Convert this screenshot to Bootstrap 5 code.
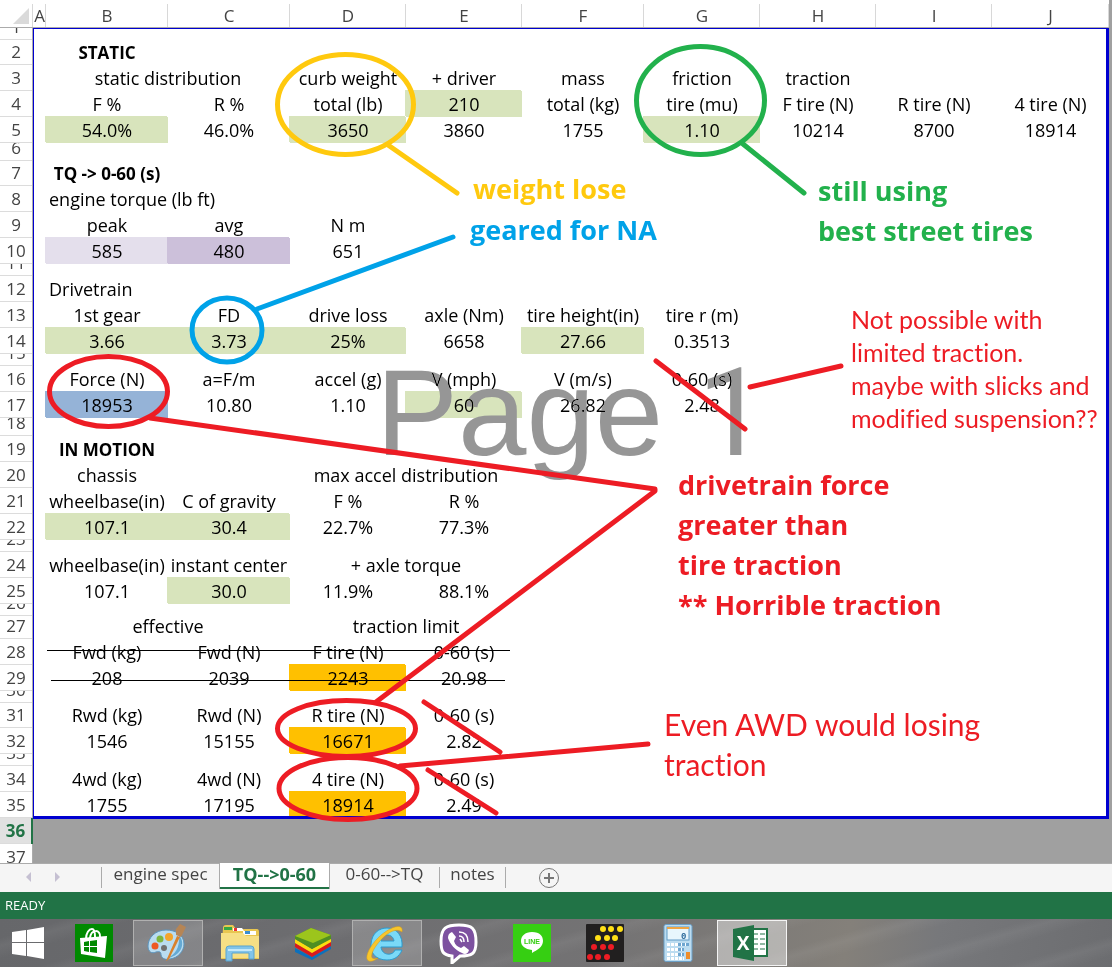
<!DOCTYPE html>
<html lang="en">
<head>
<meta charset="utf-8">
<meta name="viewport" content="width=device-width, initial-scale=1">
<title>TQ--&gt;0-60</title>
<link href="https://cdn.jsdelivr.net/npm/bootstrap@5.3.0/dist/css/bootstrap.min.css" rel="stylesheet">
<style>
  :root { --ui: "Open Sans", "Noto Sans", sans-serif; --cell: "Open Sans", "Noto Sans", sans-serif; --xl: #217346; --ink: #ed1c24; }
  body { font-family: var(--ui); background: #a0a0a0; }

  /* worksheet */
  .workarea { background: #a0a0a0; min-height: 0; }
  .grid { width: calc(100% - 3px); table-layout: fixed; border-collapse: separate; border-spacing: 0; font: 18px/21px var(--cell); color: #000; }
  .grid tr { --h: 26px; }
  .grid tr.h12 { --h: 12px; } .grid tr.h18 { --h: 18px; } .grid tr.h23 { --h: 23px; } .grid tr.h25 { --h: 25px; }
  .grid td { height: var(--h); padding: 0 0 2px; vertical-align: bottom; text-align: center; white-space: nowrap; background: #fff; }
  .grid td.fw-bold { font-size: 17px; }
  .grid td.start { text-align: left; padding-left: 3px; }
  .grid th { padding: 0; background: #fff; font: 17px/24px var(--ui); color: #444; text-align: center; }
  .grid thead th { height: 28px; line-height: 23px; border-bottom: 1px solid #ababab; background: linear-gradient(#d8d8d8, #d8d8d8) right bottom / 1px 23px no-repeat #fff; padding-top: 4px; }
  .grid thead th:first-child svg { display: block; margin-left: 13px; }
  .grid tbody th { height: var(--h); border-right: 1px solid #ababab; }
  .grid tbody th span { display: flex; align-items: flex-end; justify-content: center; height: var(--h); overflow: hidden; border-bottom: 1px solid #dcdcdc; }
  .grid tr.beyond td { background: #a0a0a0; }
  .grid tr.beyond th.current { background: #e1e1e1; color: var(--xl); font-weight: 700; border-right: 2px solid var(--xl); }
  .grid td.f-green { --f: #d8e4bc; } .grid td.f-gold { --f: #ffc000; } .grid td.f-blue { --f: #95b3d7; }
  .grid td.f-lilac { --f: #e4dfec; } .grid td.f-violet { --f: #ccc0da; }
  .grid td[class*="f-"] { background: var(--f); box-shadow: -1px -1px 0 var(--f); }
  .print-area { top: 28px; left: 33px; right: 3px; height: 791px; border: solid #0000d0; border-width: 1px 3px 3px 1px; pointer-events: none; }
  .page-mark { left: 376px; top: 342px; font: 123px/141px "Liberation Sans", Arial, sans-serif; color: #969696; mix-blend-mode: darken; white-space: nowrap; }
  .page-mark span { font-family: Roboto, sans-serif; line-height: 1; }
  .ink-layer { top: 0; left: 0; width: 100%; height: 864px; pointer-events: none; fill: none; stroke-width: 5; stroke-linecap: round; stroke-linejoin: round; }

  /* pen notes on the sheet */
  .note { white-space: nowrap; margin: 0; font: 700 27px/40px var(--cell); color: var(--ink); }
  .note-thin, .note-small { font-family: Lato, "Open Sans", sans-serif; font-weight: 400; font-variant-ligatures: none; }
  .note-thin { font-size: 30px; }
  .note-small { font-size: 25px; line-height: 33px; }
  .n-weight { left: 473px; top: 169px; color: #ffc90e; }
  .n-gear { left: 470px; top: 210px; color: #00a2e8; }
  .n-tires { left: 818px; top: 171px; color: #22b14c; }
  .n-slicks { left: 851px; top: 303px; }
  .n-force { left: 678px; top: 465px; }
  .n-awd { left: 664px; top: 704px; }

  /* sheet tabs */
  .tabbar { height: 29px; background: #f5f5f5; border-top: 1px solid #ababab; font-size: 17px; line-height: 18px; }
  .tabbar button { border: 0; background: none; padding: 0; color: #444; }
  .tab-nav { width: 101px; padding: 4px 0 0 24px; gap: 20px; }
  .sheet-tab { height: 24px; padding-bottom: 4px !important; }
  .tabbar .sep { width: 1px; height: 21px; margin-top: 3px; background: #ababab; }
  .tabbar .sheet-tab.active { margin-top: -1px; height: 26px; background: #fff; color: var(--xl); font-size: 18px; font-weight: 700; border: solid #ababab; border-width: 0 1px; box-shadow: inset 0 -2px var(--xl); }
  .w-1 { width: 117px; } .w-2 { width: 111px; } .w-3 { width: 109px; } .w-4 { width: 65px; }
  .add-tab { margin: 3px 0 0 32px; }

  .statusbar { height: 27px; background: var(--xl); color: #fff; font-size: 13px; line-height: 27px; padding-left: 5px; }

  /* taskbar */
  .taskbar { height: 48px; gap: 3px; padding: 1px 0; background: repeating-linear-gradient(164deg, transparent 0 18px, rgba(255,255,255,.05) 26px, transparent 38px), linear-gradient(100deg, #66676a 0, #6d6d70 30%, #747374 55%, #84807a 76%, #77787b 84%, #6c6d70 100%); }
  .taskbar button { width: 70px; height: 46px; padding: 0 2px 0 0; border: 1px solid transparent; background: none; }
  .taskbar button.start-btn { width: 57px; }
  .taskbar button.open { background: rgba(255,255,255,.18); border-color: #b0b0b0; }
  .taskbar button.front { background: rgba(255,255,255,.42); border-color: #f4f4f4; }
  .taskbar svg { display: block; margin: auto; }
</style>
</head>
<body>
<div class="d-flex flex-column vh-100 overflow-hidden">
  <main class="workarea position-relative flex-grow-1 overflow-hidden">
    <table class="grid">
      <colgroup><col style="width:33px"><col style="width:13px"><col style="width:122px"><col style="width:122px"><col style="width:116px"><col style="width:116px"><col style="width:122px"><col style="width:116px"><col style="width:116px"><col style="width:116px"><col style="width:117px"></colgroup>
      <thead><tr><th aria-label="Select all"><svg width="16" height="16"><path d="M16 0v16H0z" fill="#dadada"/></svg></th><th>A</th><th>B</th><th>C</th><th>D</th><th>E</th><th>F</th><th>G</th><th>H</th><th>I</th><th>J</th></tr></thead>
      <tbody>
      <tr class="h12"><th><span>1</span></th><td colspan="10"></td></tr>
      <tr class="h25"><th><span>2</span></th><td></td><td class="fw-bold">STATIC</td><td colspan="8"></td></tr>
      <tr><th><span>3</span></th><td></td><td colspan="2">static distribution</td><td>curb weight</td><td>+ driver</td><td>mass</td><td>friction</td><td>traction</td><td></td><td></td></tr>
      <tr><th><span>4</span></th><td></td><td>F %</td><td>R %</td><td>total (lb)</td><td class="f-green">210</td><td>total (kg)</td><td>tire (mu)</td><td>F tire (N)</td><td>R tire (N)</td><td>4 tire (N)</td></tr>
      <tr><th><span>5</span></th><td></td><td class="f-green">54.0%</td><td>46.0%</td><td class="f-green">3650</td><td>3860</td><td>1755</td><td class="f-green">1.10</td><td>10214</td><td>8700</td><td>18914</td></tr>
      <tr class="h18"><th><span>6</span></th><td colspan="10"></td></tr>
      <tr class="h25"><th><span>7</span></th><td></td><td class="fw-bold">TQ -&gt; 0-60 (s)</td><td colspan="8"></td></tr>
      <tr><th><span>8</span></th><td></td><td class="start" colspan="2">engine torque (lb ft)</td><td colspan="7"></td></tr>
      <tr><th><span>9</span></th><td></td><td>peak</td><td>avg</td><td>N m</td><td colspan="6"></td></tr>
      <tr><th><span>10</span></th><td></td><td class="f-lilac">585</td><td class="f-violet">480</td><td>651</td><td colspan="6"></td></tr>
      <tr class="h12"><th><span>11</span></th><td colspan="10"></td></tr>
      <tr><th><span>12</span></th><td></td><td class="start">Drivetrain</td><td colspan="8"></td></tr>
      <tr><th><span>13</span></th><td></td><td>1st gear</td><td>FD</td><td>drive loss</td><td>axle (Nm)</td><td>tire height(in)</td><td>tire r (m)</td><td colspan="3"></td></tr>
      <tr><th><span>14</span></th><td></td><td class="f-green">3.66</td><td class="f-green">3.73</td><td class="f-green">25%</td><td>6658</td><td class="f-green">27.66</td><td>0.3513</td><td colspan="3"></td></tr>
      <tr class="h12"><th><span>15</span></th><td colspan="10"></td></tr>
      <tr><th><span>16</span></th><td></td><td>Force (N)</td><td>a=F/m</td><td>accel (g)</td><td>V (mph)</td><td>V (m/s)</td><td>0-60 (s)</td><td colspan="3"></td></tr>
      <tr><th><span>17</span></th><td></td><td class="f-blue">18953</td><td>10.80</td><td>1.10</td><td class="f-green">60</td><td>26.82</td><td>2.48</td><td colspan="3"></td></tr>
      <tr class="h18"><th><span>18</span></th><td colspan="10"></td></tr>
      <tr><th><span>19</span></th><td></td><td class="fw-bold">IN MOTION</td><td colspan="8"></td></tr>
      <tr><th><span>20</span></th><td></td><td>chassis</td><td></td><td colspan="2">max accel distribution</td><td colspan="5"></td></tr>
      <tr><th><span>21</span></th><td></td><td>wheelbase(in)</td><td>C of gravity</td><td>F %</td><td>R %</td><td colspan="5"></td></tr>
      <tr><th><span>22</span></th><td></td><td class="f-green">107.1</td><td class="f-green">30.4</td><td>22.7%</td><td>77.3%</td><td colspan="5"></td></tr>
      <tr class="h12"><th><span>23</span></th><td colspan="10"></td></tr>
      <tr><th><span>24</span></th><td></td><td>wheelbase(in)</td><td>instant center</td><td colspan="2">+ axle torque</td><td colspan="5"></td></tr>
      <tr><th><span>25</span></th><td></td><td>107.1</td><td class="f-green">30.0</td><td>11.9%</td><td>88.1%</td><td colspan="5"></td></tr>
      <tr class="h12"><th><span>26</span></th><td colspan="10"></td></tr>
      <tr class="h23"><th><span>27</span></th><td></td><td colspan="2">effective</td><td colspan="2">traction limit</td><td colspan="5"></td></tr>
      <tr><th><span>28</span></th><td></td><td>Fwd (kg)</td><td>Fwd (N)</td><td>F tire (N)</td><td>0-60 (s)</td><td colspan="5"></td></tr>
      <tr><th><span>29</span></th><td></td><td>208</td><td>2039</td><td class="f-gold">2243</td><td>20.98</td><td colspan="5"></td></tr>
      <tr class="h12"><th><span>30</span></th><td colspan="10"></td></tr>
      <tr class="h25"><th><span>31</span></th><td></td><td>Rwd (kg)</td><td>Rwd (N)</td><td>R tire (N)</td><td>0-60 (s)</td><td colspan="5"></td></tr>
      <tr><th><span>32</span></th><td></td><td>1546</td><td>15155</td><td class="f-gold">16671</td><td>2.82</td><td colspan="5"></td></tr>
      <tr class="h12"><th><span>33</span></th><td colspan="10"></td></tr>
      <tr><th><span>34</span></th><td></td><td>4wd (kg)</td><td>4wd (N)</td><td>4 tire (N)</td><td>0-60 (s)</td><td colspan="5"></td></tr>
      <tr><th><span>35</span></th><td></td><td>1755</td><td>17195</td><td class="f-gold">18914</td><td>2.49</td><td colspan="5"></td></tr>
      <tr class="beyond"><th class="current"><span>36</span></th><td colspan="10"></td></tr>
      <tr class="beyond"><th><span>37</span></th><td colspan="10"></td></tr>
      </tbody>
    </table>
    <div class="page-mark position-absolute">Page <span>1</span></div>
    <div class="print-area position-absolute"></div>
    <svg class="ink-layer position-absolute" viewBox="0 0 1112 864" preserveAspectRatio="none">
      <path d="M47 650.500H510M51 680.500H505" stroke="#000" stroke-width="1" stroke-linecap="butt"/>
      <g stroke="#ffc90e"><ellipse cx="345.500" cy="104.500" rx="68" ry="50"/><path d="M388 145 457 193"/></g>
      <g stroke="#22b14c"><ellipse cx="700.500" cy="100.500" rx="64" ry="54"/><path d="M743 144 804 193"/></g>
      <g stroke="#00a2e8"><ellipse cx="227" cy="330" rx="35" ry="32"/><path d="M257 309 453 237"/></g>
      <g stroke="#ed1c24">
        <ellipse cx="108.500" cy="391.500" rx="59" ry="35"/>
        <ellipse cx="346.500" cy="728.500" rx="69" ry="28"/>
        <ellipse cx="348" cy="788.500" rx="69" ry="31"/>
        <path d="M150 418 655 489V491L376 702M656 361 745 429M750 387 841 366M424 702 500 752M428 770 496 813M400 766 648 744"/>
      </g>
    </svg>
    <p class="note n-weight position-absolute">weight lose</p>
    <p class="note n-gear position-absolute">geared for NA</p>
    <p class="note n-tires position-absolute">still using<br>best street tires</p>
    <p class="note note-small n-slicks position-absolute">Not possible with<br>limited traction.<br>maybe with slicks and<br>modified suspension??</p>
    <p class="note n-force position-absolute">drivetrain force<br>greater than<br>tire traction<br>** Horrible traction</p>
    <p class="note note-thin n-awd position-absolute">Even AWD would losing<br>traction</p>
  </main>

  <nav class="tabbar d-flex flex-shrink-0" aria-label="Sheets">
    <div class="tab-nav d-flex align-items-start">
      <button aria-label="Previous sheet"><svg class="d-block" width="9" height="18"><path d="M7 4v10L2 9z" fill="#c5c0d2"/></svg></button>
      <button aria-label="Next sheet"><svg class="d-block" width="9" height="18"><path d="M2 4v10l5-5z" fill="#c5c0d2"/></svg></button>
    </div>
    <span class="sep"></span>
    <button class="sheet-tab w-1">engine spec</button>
    <button class="sheet-tab w-2 active" aria-current="page">TQ--&gt;0-60</button>
    <button class="sheet-tab w-3">0-60--&gt;TQ</button>
    <span class="sep"></span>
    <button class="sheet-tab w-4">notes</button>
    <span class="sep"></span>
    <button class="add-tab align-self-start" aria-label="New sheet"><svg class="d-block" width="22" height="22" fill="none" stroke="#777"><circle cx="11" cy="11" r="9.500"/><path d="M11 6v10M6 11h10" stroke-width="2"/></svg></button>
  </nav>
  <div class="statusbar flex-shrink-0">READY</div>

  <footer class="taskbar d-flex flex-shrink-0">
    <button class="start-btn" aria-label="Start"><svg width="34" height="34" fill="#fff"><path d="M1 6 15 4v12H1zM16 4 33 1v15H16zM1 17h14v13L1 28zM16 17h17v16l-17-3z"/></svg></button>
    <button aria-label="Store"><svg width="38" height="38"><path fill="#008a00" d="M0 0h38v38H0z"/><path d="M11 15c0-6 3-10 6-10 2 0 3 2 3 8M15 14c1-9 11-9 10-1" fill="none" stroke="#fff" stroke-width="2"/><path fill="#fff" d="m5 14 27-2-2 22-24-4z"/><path fill="#008a00" d="m9 18 5-1v5H9zM15 17l7-1v6h-7zM9 23h5v5l-5-1zM15 23h7v6l-7-1z"/></svg></button>
    <button class="open" aria-label="Paint"><svg width="42" height="40"><path d="M20 7C9 7 2 15 2 23c0 6 4 8 8 6 4-1 5 0 5 3 1 4 5 5 9 4 8-1 14-8 14-15 0-9-8-14-18-14z" fill="#b9dcf0" stroke="#5c94bd"/><path d="M33 12c8 10 0 22-12 23 8-3 13-10 12-23z" fill="#64a9d4"/><circle cx="9" cy="23" r="3.500" fill="#ed5924"/><circle cx="14" cy="16" r="3.500" fill="#7eb63e"/><circle cx="23" cy="14" r="4" fill="#f3a52b"/><circle cx="18" cy="25" r="3" fill="#707070"/><path d="m31 13-11 25c3-1 4-3 5-6l9-18z" fill="#d9812c"/><path d="m30 6 4-5 6 3-5 10-5-2z" fill="#b68555"/></svg></button>
    <button aria-label="File Explorer"><svg width="42" height="40"><path d="M4 5q0-3 3-3h7l3 4h21q2 0 2 3v27H2z" fill="#e8c651"/><path d="M5 4h8v3H5z" fill="#35a744"/><path d="M14 5h9l2 3H14z" fill="#fff"/><path d="M15 5h3v3h-3z" fill="#e33"/><path d="M24 8h13v4H24z" fill="#fff"/><path d="M26 8h5v3h-5z" fill="#3a8ed0"/><path d="M2 10h22l3 3h13v22H2z" fill="#f6df85"/><path d="M7 26q0-3 3-3h22q3 0 3 3v10h-5v-6H13v8H7z" fill="#82c4e9" stroke="#58a3cf"/><path d="M9 26h24v2H9z" fill="#c3e8fa"/></svg></button>
    <button aria-label="BlueStacks"><svg width="38" height="34"><path d="M1 22 18 31 37 20v3L18 34 1 26z" fill="#0b70bd"/><path d="M1 17 18 26 37 15v5L18 31 1 21z" fill="#d7191f"/><path d="M1 13 18 23 37 12v4L18 27 1 17z" fill="#fbdc10"/><path d="M17 2 37 9v4L18 23 1 13v-3z" fill="#4f8f22"/><path d="M17 2 37 9 19 17 1 10z" fill="#9cc51c"/></svg></button>
    <button class="open" aria-label="Internet Explorer"><svg width="42" height="40"><path d="M37 24H16c1 9 12 9 14 3h7c-3 7-8 10-15 10C11 37 5 30 6 21 7 10 14 5 22 5c10 0 16 8 15 19zM16 18h13c-1-8-12-8-13 0z" fill="#7ad9f8" stroke="#2b9bd0"/><path d="M37 9c2-10-12-5-22 4C5 22-2 36 4 38c3 1 6-1 9-3-6 2-8 0-5-7C13 18 28 2 37 9z" fill="#f8c62c" stroke="#d69a14" stroke-width=".5"/></svg></button>
    <button aria-label="Viber"><svg width="40" height="42"><path d="M20 3c13 0 17 3 17 17 0 12-4 14-16 14l-8 7v-7C4 33 2 30 2 19 2 6 7 3 20 3z" fill="#7d51a0" stroke="#fff" stroke-width="3"/><path d="m13 10 4 5-2 4c1 4 4 6 7 7l3-2 5 4c-1 4-4 5-7 3-7-3-12-9-14-15 0-3 1-5 4-6z" fill="#fff"/><path d="M20 10c6 0 9 4 9 10M20 14c3 0 5 2 5 6M21 17l2 3" fill="none" stroke="#fff" stroke-width="1.500"/></svg></button>
    <button aria-label="LINE"><svg width="38" height="38"><path fill="#36cf12" d="M0 0h38v38H0z"/><path d="M19 8c8 0 11 4 11 9 0 6-6 9-11 12v-3C12 25 8 22 8 17c0-5 4-9 11-9z" fill="#fff"/><text x="19" y="20" text-anchor="middle" font-family="Liberation Sans, sans-serif" font-size="7" font-weight="700" fill="#36cf12">LINE</text></svg></button>
    <button aria-label="Dots"><svg width="38" height="38"><rect width="38" height="38" rx="1" fill="#211f1f"/><g fill="#ffe016"><circle cx="17" cy="5" r="3"/><circle cx="25" cy="5" r="3"/><circle cx="34" cy="5" r="3"/><circle cx="12" cy="14" r="3"/><circle cx="21" cy="14" r="3"/><circle cx="29" cy="14" r="3"/></g><g fill="#ed1c24"><circle cx="8" cy="23" r="3"/><circle cx="17" cy="23" r="3"/><circle cx="25" cy="23" r="3"/><circle cx="4" cy="33" r="3"/><circle cx="12" cy="33" r="3"/><circle cx="21" cy="33" r="3"/></g></svg></button>
    <button aria-label="Calculator"><svg width="30" height="38"><rect x="1" y=".5" width="28" height="37" rx="2" fill="#bcdcf0" stroke="#6b9fc6"/><rect x="4" y="3" width="22" height="13" fill="#e8f6fd" stroke="#619bc6"/><path d="M4 4h22" stroke="#eda546" stroke-width="2"/><text x="18" y="15" font-family="Liberation Mono, monospace" font-size="9" font-weight="700" fill="#2c6a9b">0</text><path d="M4 20.500h22M4 25.500h17M4 30.500h17M4 34.500h17" stroke="#fff" stroke-width="3" stroke-dasharray="3 1"/><path d="M15 20.500h11M15 25.500h6M15 30.500h6" stroke="#6fa6d0" stroke-width="3" stroke-dasharray="3 1"/><path d="M23 28h4v7h-4z" fill="#ef8d2a"/></svg></button>
    <button class="front" aria-label="Excel"><svg width="38" height="38"><path d="M20 5h15v27H20z" fill="#fff" stroke="#217346" stroke-width="2"/><path d="M21 10h5M21 15h5M21 20h5M21 25h5M28 10h5M28 15h5M28 20h5M28 25h5" stroke="#217346" stroke-width="1"/><path d="m1 5 21-4v36L1 33z" fill="#217346"/><text x="11" y="26" text-anchor="middle" font-family="Open Sans, sans-serif" font-size="19" font-weight="700" fill="#fff">X</text></svg></button>
  </footer>
</div>
<script src="https://cdn.jsdelivr.net/npm/bootstrap@5.3.0/dist/js/bootstrap.bundle.min.js"></script>
</body>
</html>
